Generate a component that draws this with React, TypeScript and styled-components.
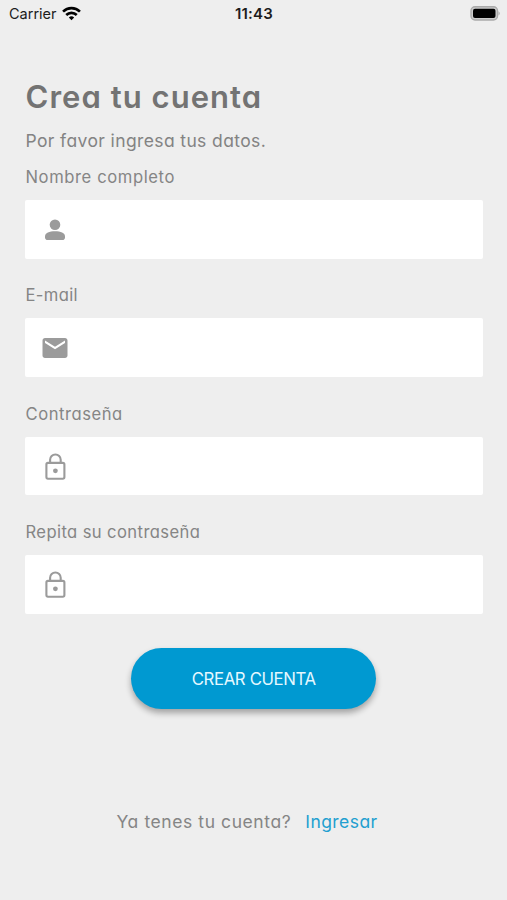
import React from "react";
import styled, { createGlobalStyle } from "styled-components";

const GlobalStyle = createGlobalStyle`
  * { box-sizing: border-box; }
  body {
    margin: 0;
    background: #eeeeee;
    font-family: Inter, "Open Sans", sans-serif;
    font-feature-settings: "cv11" 1;
  }
`;

const Screen = styled.main`
  width: 507px;
  height: 900px;
  overflow: hidden;
  background: #eeeeee;
  display: flex;
  flex-direction: column;
`;

const StatusBar = styled.header`
  height: 28px;
  padding: 0 6px 0 9px;
  display: grid;
  grid-template-columns: 1fr auto 1fr;
  align-items: center;
  color: #1c1c1c;
  font-size: 14.5px;
  line-height: 28px;
`;

const Carrier = styled.div`
  display: flex;
  align-items: center;
  gap: 5px;
  font-feature-settings: normal;

  svg {
    margin-top: -2px;
  }
`;

const Time = styled.time`
  font-weight: 600;
  font-size: 15px;
  letter-spacing: 0.2px;
  margin-right: 2px;
`;

const BatteryIcon = styled.svg`
  justify-self: end;
  margin-top: -2px;
`;

const Form = styled.form`
  padding: 46px 24.5px 0 25px;
  display: flex;
  flex-direction: column;
`;

const Title = styled.h1<{ $spacing: number }>`
  margin: 0 0 0 0.5px;
  height: 46px;
  line-height: 46px;
  font-size: 31px;
  font-weight: 600;
  color: #737373;
  letter-spacing: ${(p) => p.$spacing}px;
  white-space: nowrap;
`;

const Subtitle = styled.p<{ $spacing: number }>`
  margin: 7px 0 8px 0.5px;
  height: 27px;
  line-height: 27px;
  font-size: 17.5px;
  color: #838383;
  letter-spacing: ${(p) => p.$spacing}px;
  white-space: nowrap;
`;

const Field = styled.div`
  height: 118.4px;
  display: flex;
  flex-direction: column;
`;

const Label = styled.label<{ $spacing: number }>`
  height: 38px;
  padding-left: 0.5px;
  line-height: 30px;
  font-size: 16.6px;
  color: #858585;
  letter-spacing: ${(p) => p.$spacing}px;
  white-space: nowrap;
`;

const InputBox = styled.div`
  height: 58.6px;
  padding: 1px 0 0 14.5px;
  display: flex;
  align-items: center;
  background: #ffffff;
  border-radius: 2px;
  color: #9b9b9b;
`;

const Input = styled.input`
  flex: 1;
  height: 100%;
  border: 0;
  outline: 0;
  background: transparent;
  font: inherit;
`;

const SubmitButton = styled.button`
  align-self: center;
  margin-top: 12.4px;
  width: 245px;
  height: 61px;
  padding: 2px 0 0;
  border: 0;
  border-radius: 31px;
  background: #0099d1;
  color: #e4f8ff;
  font: inherit;
  font-size: 16.8px;
  letter-spacing: -0.38px;
  box-shadow: 0 4px 6px rgba(0, 0, 0, 0.32);
`;

const Footer = styled.footer`
  margin-top: 99px;
  padding-left: 116.5px;
  display: flex;
  gap: 14px;
  line-height: 28px;
  font-size: 17.5px;
  letter-spacing: 0.58px;
  color: #858585;
  white-space: nowrap;
`;

const SignInLink = styled.a`
  color: #229fd0;
  letter-spacing: 0.45px;
  text-decoration: none;
`;

const PersonIcon = () => (
  <svg width="30" height="30" viewBox="0 0 30 30" fill="currentColor">
    <ellipse cx="15" cy="9.8" rx="5.3" ry="5.2" />
    <path d="M5 21.4C5 17.8 9.4 16.2 15 16.2S25 17.8 25 21.4V22.2Q25 25 22.2 25H7.8Q5 25 5 22.2Z" />
  </svg>
);

const MailIcon = () => (
  <svg width="30" height="30" viewBox="0 0 24 24" fill="currentColor">
    <path d="M20 4H4c-1.1 0-1.99.9-1.99 2L2 18c0 1.1.9 2 2 2h16c1.1 0 2-.9 2-2V6c0-1.1-.9-2-2-2zm0 4l-8 5-8-5V6l8 5 8-5v2z" />
  </svg>
);

const LockIcon = () => (
  <svg width="30" height="30" viewBox="0 0 30 30" fill="none" stroke="currentColor" strokeWidth="2.1">
    <rect x="6.4" y="10.9" width="18" height="15.8" rx="1.6" />
    <path d="M10.1 10.9V7.8a5.3 5.3 0 0 1 10.6 0V10.9" />
    <circle cx="15.4" cy="18.8" r="2.4" fill="currentColor" stroke="none" />
  </svg>
);

const WifiIcon = () => (
  <svg width="19" height="15" viewBox="0 0 18 14" fill="none" stroke="#000" strokeWidth="2.5">
    <path d="M1 5.2a11.4 11.4 0 0 1 16 0" />
    <path d="M4 8.4a7.2 7.2 0 0 1 10 0" />
    <path d="M6.5 10.8a3.6 3.6 0 0 1 5 0L9 13.4Z" fill="#000" stroke="none" />
  </svg>
);

const fields = [
  { id: "name", label: "Nombre completo", type: "text", spacing: 0.6, Icon: PersonIcon },
  { id: "email", label: "E-mail", type: "email", spacing: 0.35, Icon: MailIcon },
  { id: "password", label: "Contraseña", type: "password", spacing: 0.55, Icon: LockIcon },
  { id: "repeat", label: "Repita su contraseña", type: "password", spacing: 0.4, Icon: LockIcon },
];

export default function App() {
  return (
    <Screen>
      <GlobalStyle />
      <StatusBar>
        <Carrier>
          <span>Carrier</span>
          <WifiIcon />
        </Carrier>
        <Time>11:43</Time>
        <BatteryIcon width="31" height="15" viewBox="0 0 31 15">
          <rect x="1" y="0.8" width="26.5" height="13.2" rx="4" fill="#ccc" stroke="#aaa" strokeWidth="1.4" />
          <rect x="3" y="2.8" width="22.5" height="9.2" rx="2" fill="#000" />
          <path d="M28.5 5.2Q31 7.4 28.5 9.6Z" fill="#aaa" />
        </BatteryIcon>
      </StatusBar>
      <Form>
        <Title $spacing={1.05}>Crea tu cuenta</Title>
        <Subtitle $spacing={0.38}>Por favor ingresa tus datos.</Subtitle>
        {fields.map(({ id, label, type, spacing, Icon }) => (
          <Field key={id}>
            <Label htmlFor={id} $spacing={spacing}>{label}</Label>
            <InputBox>
              <Icon />
              <Input id={id} type={type} />
            </InputBox>
          </Field>
        ))}
        <SubmitButton type="button">CREAR CUENTA</SubmitButton>
      </Form>
      <Footer>
        <span>Ya tenes tu cuenta?</span>
        <SignInLink>Ingresar</SignInLink>
      </Footer>
    </Screen>
  );
}
